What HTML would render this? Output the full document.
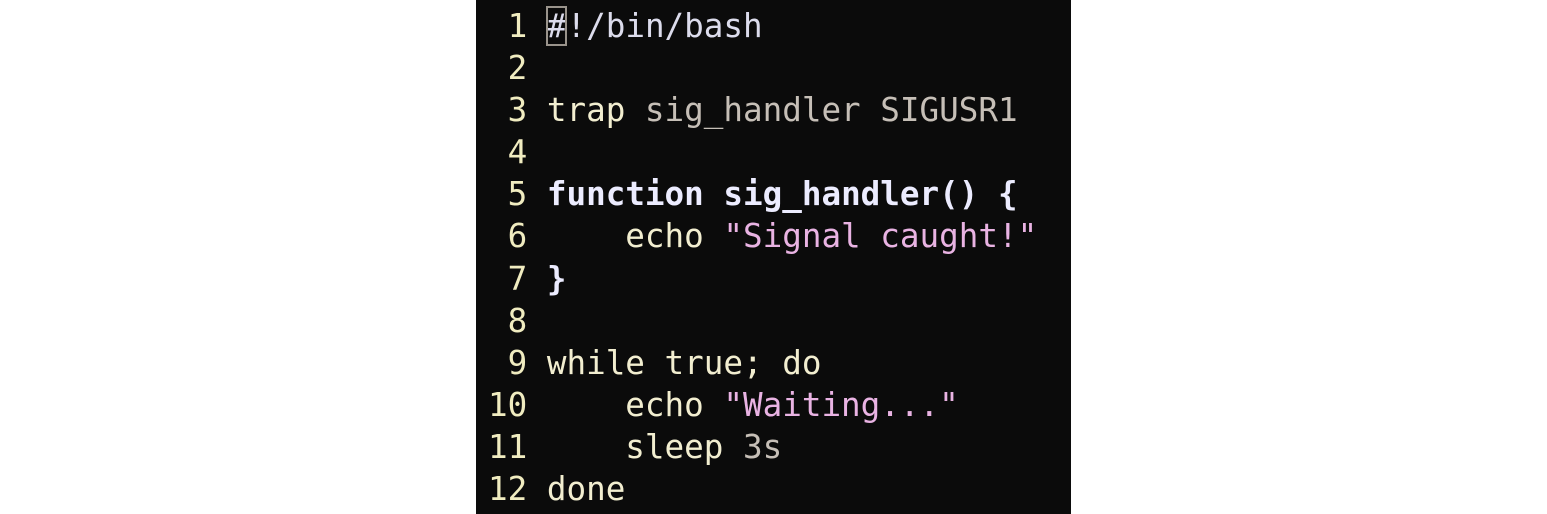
<!DOCTYPE html>
<html><head><style>
body{margin:0;width:1547px;height:514px;background:#fff;overflow:hidden}
#t{position:absolute;left:476px;top:0;width:595px;height:514px;background:#0b0b0b}
pre{margin:0;position:absolute;left:488px;top:5px;font-family:"DejaVu Sans Mono","Liberation Mono",monospace;font-size:32.6px;line-height:42.1px;color:#f2eed0}
.n{color:#f0ecc0}.c{color:#dcdcec}.g{color:#c6bfb7}.b{color:#ececff;font-weight:bold}.s{color:#e9b3e3}
.cur{outline:2px solid #9a948c;outline-offset:-1px}
</style></head><body><div id="t"></div>
<pre><span class="n"> 1</span> <span class="c"><span class="cur">#</span>!/bin/bash</span>
<span class="n"> 2</span>
<span class="n"> 3</span> trap <span class="g">sig_handler SIGUSR1</span>
<span class="n"> 4</span>
<span class="n"> 5</span> <span class="b">function sig_handler() {</span>
<span class="n"> 6</span>     echo <span class="s">"Signal caught!"</span>
<span class="n"> 7</span> <span class="b">}</span>
<span class="n"> 8</span>
<span class="n"> 9</span> while true; do
<span class="n">10</span>     echo <span class="s">"Waiting..."</span>
<span class="n">11</span>     sleep <span class="g">3s</span>
<span class="n">12</span> done</pre>
</body></html>
